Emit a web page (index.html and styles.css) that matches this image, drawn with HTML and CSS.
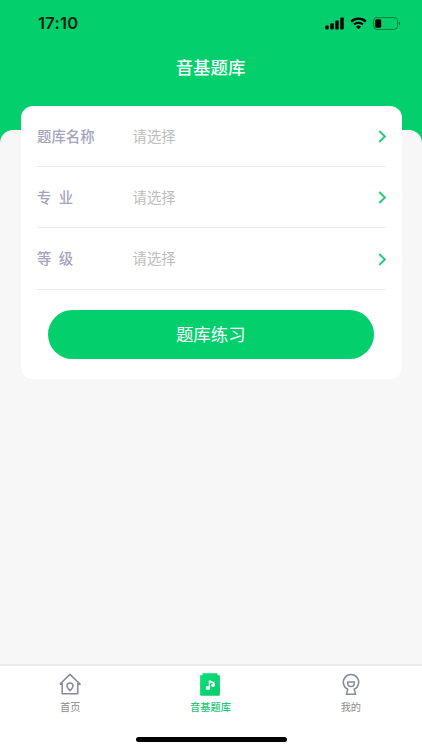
FILE: index.html
```html
<!DOCTYPE html>
<html lang="zh-CN">
<head>
    <meta charset="UTF-8">
    <meta name="viewport" content="width=device-width, initial-scale=1.0">
    <title>音基题库</title>
    <link rel="stylesheet" href="styles.css">
</head>
<body>
    <header class="header">
        <div class="status-bar">
            <span class="time">17:10</span>
            <div class="status-icons">
                <svg class="signal" width="20" height="13" viewBox="0 0 20 13">
                    <rect x="0.3" y="8.5" width="3.4" height="4" rx="0.9"/>
                    <rect x="5.3" y="6.3" width="3.4" height="6.2" rx="0.9"/>
                    <rect x="10.3" y="3.6" width="3.4" height="8.9" rx="0.9"/>
                    <rect x="15.3" y="0.4" width="3.4" height="12.1" rx="0.9"/>
                </svg>
                <svg class="wifi" width="17" height="13" viewBox="0 0 17 13">
                    <path d="M1.2 4.6a10.4 10.4 0 0 1 14.6 0" fill="none" stroke="#000" stroke-width="2.3"/>
                    <path d="M4 7.5a6.5 6.5 0 0 1 9 0" fill="none" stroke="#000" stroke-width="2.1"/>
                    <path d="M8.5 12.3L6 9.8a3.6 3.6 0 0 1 5 0z"/>
                </svg>
                <svg class="battery" width="28" height="13" viewBox="0 0 28 13">
                    <rect x="0.6" y="0.6" width="24" height="11.8" rx="3.4" fill="none" stroke="#000" stroke-opacity="0.4"/>
                    <rect x="2.2" y="2.2" width="6" height="8.6" rx="1.6"/>
                    <path d="M25.9 4.5c1.6.5 1.6 3.5 0 4z" fill-opacity="0.5"/>
                </svg>
            </div>
        </div>
        <h1 class="title">音基题库</h1>
    </header>

    <main class="content">
        <div class="card">
            <div class="row">
                <span class="label">题库名称</span>
                <span class="value">请选择</span>
                <svg class="arrow" width="8" height="13" viewBox="0 0 8 13"><path d="M1.300 1L6.900 6.500L1.300 12"/></svg>
            </div>
            <div class="row">
                <span class="label">专 业</span>
                <span class="value">请选择</span>
                <svg class="arrow" width="8" height="13" viewBox="0 0 8 13"><path d="M1.300 1L6.900 6.500L1.300 12"/></svg>
            </div>
            <div class="row">
                <span class="label">等 级</span>
                <span class="value">请选择</span>
                <svg class="arrow" width="8" height="13" viewBox="0 0 8 13"><path d="M1.300 1L6.900 6.500L1.300 12"/></svg>
            </div>
            <button class="button">题库练习</button>
        </div>
    </main>

    <nav class="tabbar">
        <a href="#" class="tab">
            <svg width="24" height="24" viewBox="0 0 24 24">
                <path d="M4.200 11v10.700h15.600V11M1.800 12.200L12 2.400l10.200 9.800h-2.400M1.800 12.200h2.400"/>
                <path d="M12 18.600c-1.900-1.900-3-3-3-4.700a3 3 0 0 1 6 0c0 1.700-1.100 2.800-3 4.700z"/>
            </svg>
            <span>首页</span>
        </a>
        <a href="#" class="tab active">
            <svg width="24" height="24" viewBox="0 0 24 24">
                <defs>
                    <linearGradient id="book" x1="0" y1="0" x2="1" y2="1">
                        <stop offset="0" stop-color="#0be07c"/>
                        <stop offset="1" stop-color="#06cb69"/>
                    </linearGradient>
                </defs>
                <path class="book" d="M4.500 1.200H19.500V3.200H21.900V22.600Q21.900 23.800 20.700 23.800H3.300Q2.100 23.800 2.100 22.600V3.200H4.500z"/>
                <g class="note">
                    <ellipse cx="9.900" cy="16" rx="2.300" ry="2.100"/>
                    <circle cx="15" cy="13.300" r="1.700"/>
                    <path d="M10.800 16V8.300Q14 8.600 16.700 10.600V13.300H15.300V11.800Q13.800 10.900 12.100 10.700V16z"/>
                </g>
            </svg>
            <span>音基题库</span>
        </a>
        <a href="#" class="tab">
            <svg width="24" height="24" viewBox="0 0 24 24">
                <path d="M8.800 17.200a7.700 7.700 0 1 1 6.400 0l1.400 5h-9.200z"/>
                <path d="M8.700 10h6.600v1.200a3.300 3.300 0 0 1-6.600 0z"/>
            </svg>
            <span>我的</span>
        </a>
        <div class="home-indicator"></div>
    </nav>
</body>
</html>
```

FILE: styles.css
```css
* {
    box-sizing: border-box;
}
body {
    margin: 0;
    height: 750px;
    display: flex;
    flex-direction: column;
    overflow: hidden;
    background-color: #03d06c;
    font-family: "Noto Sans CJK SC", sans-serif;
}

/* Header */
.header {
    height: 130px;
    flex: none;
}
.status-bar {
    display: flex;
    justify-content: space-between;
    align-items: center;
    height: 46px;
    padding: 0 21px 0 38px;
}
.time {
    font-family: Inter, sans-serif;
    font-size: 16.5px;
    font-weight: 600;
    line-height: 20px;
    letter-spacing: 0.3px;
    color: #04210f;
}
.status-icons {
    display: flex;
    align-items: center;
}
.wifi {
    margin: 0 6px 0 5px;
}
.title {
    margin: 8px 1px 0 0;
    font-size: 17.4px;
    font-weight: 500;
    line-height: 26px;
    text-align: center;
    color: #fff;
}

/* Form card */
.content {
    flex: 1;
    padding: 0 20.5px;
    background-color: #f7f7f7;
    border-radius: 13px 13px 0 0;
}
.card {
    height: 273px;
    margin-top: -24px;
    padding: 0 16px 0 16.5px;
    background-color: #fff;
    border-radius: 12px;
}
.row {
    display: flex;
    align-items: center;
    height: 61px;
    border-bottom: 1px solid #ebebeb;
}
.row:nth-child(3) {
    height: 62px;
}
.label {
    width: 95.5px;
    padding-bottom: 2px;
    font-size: 14.4px;
    font-weight: 500;
    word-spacing: 4px;
    color: #a3a3bb;
}
.value {
    flex: 1;
    padding-bottom: 2px;
    font-size: 14.4px;
    color: #bdbdbd;
}
.arrow {
    margin-top: 1px;
    fill: none;
    stroke: #1fcb78;
    stroke-width: 1.8;
}
.button {
    display: block;
    width: 326px;
    height: 49px;
    margin: 20px auto 0;
    padding: 0 1px 2px 0;
    border: none;
    border-radius: 25px;
    background-color: #03d06c;
    color: #fff;
    font-family: inherit;
    font-size: 17.4px;
}

/* Bottom tabs */
.tabbar {
    position: relative;
    display: flex;
    flex: none;
    height: 86px;
    padding-right: 1px;
    border-top: 2px solid #ebebeb;
    background-color: #fff;
}
.tab {
    flex: 1;
    display: flex;
    flex-direction: column;
    align-items: center;
    padding-top: 6px;
    text-decoration: none;
    font-size: 10.2px;
    line-height: 14px;
    color: #8c8c8c;
}
.tab svg {
    margin-bottom: 4px;
    fill: none;
    stroke: #85899a;
    stroke-width: 1.5;
    stroke-linejoin: round;
}
.tab.active {
    color: #1fc877;
    font-weight: 500;
}
.tab .book {
    fill: url(#book);
    stroke: none;
}
.tab .note {
    fill: #fff;
    stroke: none;
}
.home-indicator {
    position: absolute;
    left: 50%;
    bottom: 8px;
    width: 151px;
    height: 5px;
    margin-left: -75.5px;
    border-radius: 3px;
    background-color: #000;
}
```
